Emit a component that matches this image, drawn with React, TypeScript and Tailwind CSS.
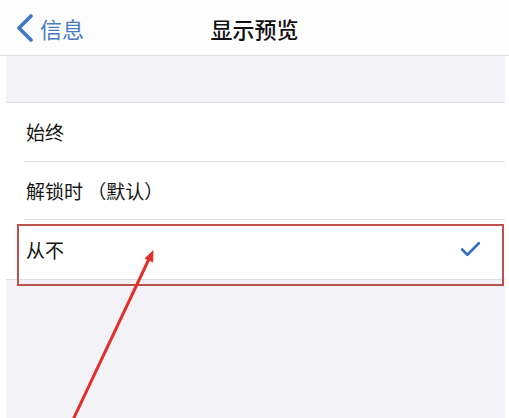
import { Check } from 'lucide-react';

const rows = [
  { label: '始终', checked: false },
  { label: '解锁时 （默认）', checked: false },
  { label: '从不', checked: true },
];

export default function App() {
  return (
    <div
      className="relative h-[418px] w-[509px] overflow-hidden bg-white"
      style={{ fontFamily: '"Noto Sans CJK SC", "Noto Sans", sans-serif' }}
    >
      <header className="relative flex h-[56px] items-center border-b border-[#dcdce0] bg-[#fdfdfd]">
        <div className="flex items-center pl-[15px] text-[#4a7bc0]">
          <svg width="20" height="28" viewBox="0 0 20 28" fill="none">
            <path d="M16 2 L4 14 L16 26" stroke="#3f78c8" strokeWidth="3.6" strokeLinecap="round" strokeLinejoin="round" />
          </svg>
          <span className="ml-[5px] text-[22px] leading-none">信息</span>
        </div>
        <h1 className="absolute left-1/2 -translate-x-1/2 text-[22px] font-medium leading-none text-[#111]">
          显示预览
        </h1>
      </header>

      <div className="ml-[6px] mr-[4px] h-[362px] bg-[#f2f2f7]">
        <div className="h-[47px] border-b border-[#dcdce0]" />
        <ul className="bg-white">
          {rows.map((row, i) => (
            <li key={row.label} className="flex h-[58.5px] items-stretch pl-[18px]">
              <div
                className={
                  'flex flex-1 items-center pr-[22px] ' +
                  (i < rows.length - 1 ? 'border-b border-[#e3e3e6]' : '')
                }
              >
                <span className="whitespace-pre pl-[2px] text-[19px] leading-none text-[#141414]">{row.label}</span>
                {row.checked ? (
                  <Check className="ml-auto text-[#3a6fc0]" size={25} strokeWidth={2.6} />
                ) : null}
              </div>
            </li>
          ))}
        </ul>
        <div className="border-t border-[#dcdce0]" />
      </div>

      <div className="pointer-events-none absolute left-[17px] top-[224px] h-[62px] w-[487px] border-2 border-[#c0504d]" />

      <svg className="pointer-events-none absolute left-0 top-0" width="509" height="418" viewBox="0 0 509 418">
        <line x1="71" y1="424" x2="149" y2="259" stroke="#e0302a" strokeWidth="3" />
        <polygon points="153.5,250 153,262.5 144.5,258.5" fill="#e0302a" />
      </svg>
    </div>
  );
}
